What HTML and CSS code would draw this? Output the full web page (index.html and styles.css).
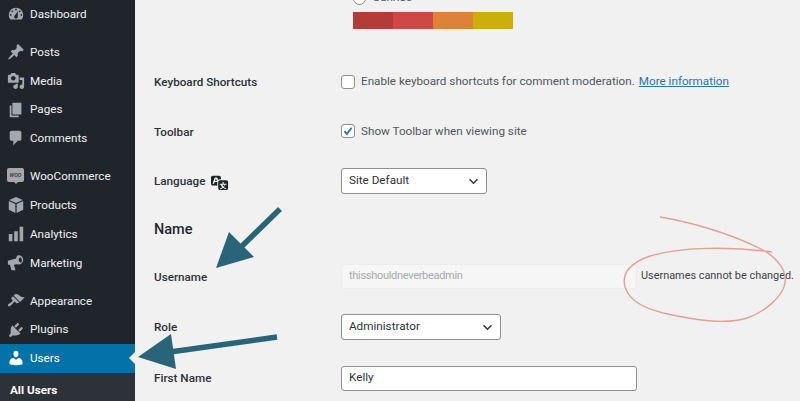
FILE: index.html
```html
<!DOCTYPE html>
<html lang="en">
<head>
<meta charset="utf-8">
<title>Profile</title>
<link rel="stylesheet" href="styles.css">
</head>
<body>
<div class="page">
  <nav class="sidebar">
    <a class="item"><svg class="ico" viewBox="0 0 20 20"><path fill-rule="evenodd" d="M3.76 16h12.48c1.1-1.37 1.76-3.11 1.76-5 0-4.42-3.58-8-8-8s-8 3.58-8 8c0 1.89.66 3.63 1.76 5zM10 4c.55 0 1 .45 1 1s-.45 1-1 1-1-.45-1-1 .45-1 1-1zM6 6c.55 0 1 .45 1 1s-.45 1-1 1-1-.45-1-1 .45-1 1-1zm8 0c.55 0 1 .45 1 1s-.45 1-1 1-1-.45-1-1 .45-1 1-1zm-5.37 5.55L12 7v6c0 1.1-.9 2-2 2s-2-.9-2-2c0-.57.24-1.08.63-1.45zM4 10c.55 0 1 .45 1 1s-.45 1-1 1-1-.45-1-1 .45-1 1-1zm12 0c.55 0 1 .45 1 1s-.45 1-1 1-1-.45-1-1 .45-1 1-1z"/></svg>Dashboard</a>
    <div class="group">
      <a class="item"><svg class="ico" viewBox="0 0 20 20"><path d="M10.44 3.02l1.82-1.82 6.36 6.35-1.83 1.82c-1.05-.68-2.48-.57-3.41.36l-.75.75c-.92.93-1.04 2.35-.35 3.41l-1.83 1.82-2.41-2.41-2.8 2.79c-.42.42-3.38 2.71-3.8 2.29s1.86-3.39 2.28-3.81l2.79-2.79L4.1 9.36l1.83-1.82c1.05.69 2.48.57 3.4-.36l.75-.75c.93-.92 1.05-2.35.36-3.41z"/></svg>Posts</a>
      <a class="item"><svg class="ico" viewBox="0 0 20 20"><path fill-rule="evenodd" d="M13 11V4c0-.55-.45-1-1-1h-1.67L9 1H5L3.67 3H2c-.55 0-1 .45-1 1v7c0 .55.45 1 1 1h10c.55 0 1-.45 1-1zM7 4.5c1.38 0 2.5 1.12 2.5 2.5S8.38 9.5 7 9.5 4.5 8.38 4.5 7 5.62 4.5 7 4.5zM14 6h5v10.5c0 1.38-1.12 2.5-2.5 2.5S14 17.88 14 16.5s1.12-2.5 2.5-2.5c.17 0 .34.02.5.05V9h-3V6zm-4 8.05V13h2v3.5c0 1.38-1.12 2.5-2.5 2.5S7 17.88 7 16.5 8.12 14 9.5 14c.17 0 .34.02.5.05z"/></svg>Media</a>
      <a class="item"><svg class="ico" viewBox="0 0 20 20"><path d="M6 15V2h10v13H6zm-1 1h8v2H3V5h2v11z"/></svg>Pages</a>
      <a class="item"><svg class="ico" viewBox="0 0 20 20"><path d="M5 2h9c1.1 0 2 .9 2 2v7c0 1.1-.9 2-2 2h-2l-5 5v-5H5c-1.1 0-2-.9-2-2V4c0-1.1.9-2 2-2z"/></svg>Comments</a>
    </div>
    <div class="group">
      <a class="item"><span class="woo">woo</span>WooCommerce</a>
      <a class="item"><svg class="ico" viewBox="0 0 20 20"><path d="M10 1l7.5 3.4L10 7.8 2.500 4.400zM2 5.600l7.300 3.400V19L2 15.200zM18 5.600v9.600L10.700 19V9z"/></svg>Products</a>
      <a class="item"><svg class="ico" viewBox="0 0 20 20"><path d="M18 18V2h-4v16h4zm-6 0V7H8v11h4zm-6 0v-8H2v8h4z"/></svg>Analytics</a>
      <a class="item"><svg class="ico" viewBox="0 0 20 20"><path fill-rule="evenodd" d="M1 7.500l9-2.500a6 6 0 0 1 2-3.500 5 5 0 0 1 6 5.500 5 5 0 0 1-6 4.500l-3.500.2-.7 1 1.700 5.300H5l-1.700-6H1zM14.500 3.500a3.500 3.500 0 0 0-1.500 3.300 3.500 3.500 0 0 0 2.500 3 3.300 3.300 0 0 0 1-3.200 3.500 3.500 0 0 0-2-3.100z"/></svg>Marketing</a>
    </div>
    <div class="group">
      <a class="item"><svg class="ico" viewBox="0 0 20 20"><path d="M14.480 11.060L7.410 3.990l1.500-1.500c.5-.56 2.300-.47 3.510.32 1.210.8 1.430 1.280 2.910 2.100 1.180.64 2.450 1.260 4.450.85zm-.71.71L6.700 4.700 4.930 6.470c-.39.39-.39 1.020 0 1.410l1.060 1.060c.39.39.39 1.030 0 1.420-.6.6-1.430 1.110-2.210 1.690-.35.26-.7.53-1.010.84C1.430 13.230.4 14.660 1.400 15.660c.99 1 2.410-.03 3.750-1.370.31-.31.58-.66.85-1.020.57-.78 1.080-1.610 1.690-2.210.39-.39 1.020-.39 1.410 0l1.060 1.060c.39.39 1.020.39 1.410 0z"/></svg>Appearance</a>
      <a class="item"><svg class="ico" viewBox="0 0 20 20"><path d="M13.110 4.360L9.870 7.600 8 5.730l3.240-3.240c.35-.34 1.050-.2 1.560.32.520.51.660 1.210.310 1.550zm-8 1.770l.91-1.120 9.010 9.010-1.190.84c-.71.71-2.630 1.160-3.820 1.160H6.140L4.900 17.260c-.59.59-1.540.59-2.120 0-.59-.58-.59-1.530 0-2.120l1.240-1.240v-3.880c0-1.130.4-3.190 1.090-3.890zm7.260 3.970l3.240-3.240c.34-.35 1.040-.21 1.550.31.520.51.660 1.210.310 1.550l-3.240 3.250z"/></svg>Plugins</a>
      <a class="item current"><svg class="ico" viewBox="0 0 20 20"><path d="M10 9.250c-2.270 0-2.730-3.440-2.730-3.440C7 4.020 7.820 2 9.970 2c2.160 0 2.980 2.020 2.710 3.810 0 0-.41 3.440-2.680 3.440zm0 2.570L12.720 10c2.390 0 4.520 2.330 4.520 4.530v2.490s-3.650 1.130-7.240 1.130c-3.650 0-7.240-1.130-7.240-1.130v-2.490c0-2.250 1.940-4.480 4.470-4.480z"/></svg>Users</a>
    </div>
    <div class="submenu"><a class="subitem">All Users</a></div>
  </nav>

  <main class="content">
    <div class="scheme">
      <label class="radio-line"><span class="radio"></span>Sunrise</label>
      <div class="swatches">
        <span class="sw sw1"></span><span class="sw sw2"></span><span class="sw sw3"></span><span class="sw sw4"></span>
      </div>
    </div>

    <div class="row r50">
      <div class="label">Keyboard Shortcuts</div>
      <div class="field"><span class="check"></span><span>Enable keyboard shortcuts for comment moderation.</span> <a class="link">More information</a></div>
    </div>
    <div class="row r49">
      <div class="label">Toolbar</div>
      <div class="field"><span class="check checked"><svg viewBox="0 0 14 14"><path d="M2.800 7.200l3 3.200 5.400-7.200" fill="none" stroke="#2b7cb0" stroke-width="2.200"/></svg></span><span>Show Toolbar when viewing site</span></div>
    </div>
    <div class="row r50">
      <div class="label">Language <svg class="lang" viewBox="0 0 20 20"><path fill-rule="evenodd" d="M11 7H9.490c-.63 0-1.250.3-1.590.7L7 5H4.130l-2.390 7h1.690l.74-2H7v4H2c-1.100 0-2-.9-2-2V5c0-1.100.9-2 2-2h7c1.100 0 2 .9 2 2v2zM6.510 9H4.490l1-2.930zM10 8h7c1.100 0 2 .9 2 2v7c0 1.100-.9 2-2 2h-7c-1.100 0-2-.9-2-2v-7c0-1.100.9-2 2-2zm7.250 5v-1.080h-3.170V9.750h-1.160v2.170H9.750V13h1.150c.34 1.120.88 2.060 1.600 2.800-.73.65-1.550 1.150-2.470 1.500l.46 1.070c1.050-.45 2-1.060 2.820-1.850.72.62 1.830 1.180 3.340 1.670l.47-1.070c-1.310-.35-2.340-.83-3-1.430.73-.84 1.250-1.780 1.520-2.690h1.010zm-2.250 0c-.23.7-.6 1.360-1.140 2-.52-.59-.92-1.280-1.130-2h2.270z"/></svg></div>
      <div class="field"><div class="select w146">Site Default<svg class="chev" viewBox="0 0 12 8"><path d="M1.500 1.500L6 6l4.500-4.500" fill="none" stroke="#2c3338" stroke-width="1.600"/></svg></div></div>
    </div>
    <h2 class="heading">Name</h2>
    <div class="row r49">
      <div class="label">Username</div>
      <div class="field"><div class="input disabled">thisshouldneverbeadmin</div><span class="note">Usernames cannot be changed.</span></div>
    </div>
    <div class="row r52">
      <div class="label">Role</div>
      <div class="field"><div class="select w160">Administrator<svg class="chev" viewBox="0 0 12 8"><path d="M1.500 1.500L6 6l4.500-4.500" fill="none" stroke="#2c3338" stroke-width="1.600"/></svg></div></div>
    </div>
    <div class="row r50">
      <div class="label">First Name</div>
      <div class="field"><div class="input">Kelly</div></div>
    </div>
  </main>

  <svg class="overlay" viewBox="0 0 800 401">
    <path class="arrow-line" d="M280 209L240 248"/>
    <path class="arrow-head" d="M216 268L229 232L254 257Z"/>
    <path class="arrow-line" d="M277 337L170 352"/>
    <path class="arrow-head" d="M138 357L171 334L176 369Z"/>
    <path class="circle" d="M660 217C690 222 730 233 763 250C777 258 787 270 785 283C783 296 765 312 747 318C725 325 695 320 663 313C645 308 630 302 625 287C621 272 633 262 650 256C680 247 730 246 772 252"/>
  </svg>
</div>
</body>
</html>
```

FILE: styles.css
```css
* { box-sizing: border-box; }
html, body { margin: 0; padding: 0; height: 401px; overflow: hidden; }
body { background: #f1f1f1; color: #3c434a; font: 11.700px/1.3 Roboto, "Liberation Sans", sans-serif; }

.page { position: relative; display: flex; width: 800px; height: 401px; overflow: hidden; }

.sidebar { flex: 0 0 135px; background: #20252b; display: flex; flex-direction: column; color: #f0f0f1; }
.item { position: relative; height: 28.8px; display: flex; align-items: center; padding-left: 30px; color: #eef0f1; }
.group { margin-top: 9.200px; }
.ico { position: absolute; left: 7px; top: 5px; width: 18px; height: 18px; fill: #a4a8ac; }
.woo { position: absolute; left: 7px; top: 6px; width: 17px; height: 14px; border-radius: 2px; background: #a4a8ac; color: #20252b; font-size: 6.500px; line-height: 14px; text-align: center; font-style: italic; }
.woo::after { content: ""; position: absolute; left: 7px; top: 14px; border: 2px solid transparent; border-top-color: #a4a8ac; }
.current { background: #0272a8; color: #fff; }
.current .ico { fill: #fff; }
.current::after { content: ""; position: absolute; right: 0; top: 8px; border: 6px solid transparent; border-right-color: #f1f1f1; border-left-width: 0; }
.submenu { background: #2c3237; flex: 1; padding-top: 10px; }
.subitem { display: block; padding-left: 10px; font-weight: 700; color: #fff; }

.content { flex: 1; padding-left: 19px; min-width: 0; }
.scheme { display: flow-root; height: 57px; padding-left: 199px; }
.radio-line { display: flex; align-items: center; gap: 7px; height: 20px; margin-top: -12px; color: #50575e; }
.radio { width: 13px; height: 13px; border-radius: 50%; border: 1px solid #8c8f94; background: #fff; }
.swatches { display: flex; width: 160px; height: 17px; margin-top: 4px; }
.sw { flex: 1; }
.sw1 { background: #b43c38; }
.sw2 { background: #cf4944; }
.sw3 { background: #dd823b; }
.sw4 { background: #ccaf0b; }

.row { display: flex; align-items: center; }
.r49 { height: 49px; }
.r50 { height: 50px; }
.r52 { height: 52px; }
.label { flex: 0 0 187px; padding-top: 2px; font-weight: 500; color: #2c3338; display: flex; align-items: center; gap: 6px; }
.lang { width: 18px; height: 18px; fill: #1d2327; }
.field { display: flex; align-items: center; color: #50575e; white-space: nowrap; }
.link { color: #2a76a8; text-decoration: underline; margin-left: 4px; }

.check { width: 14px; height: 14px; margin-right: 6px; border: 1px solid #8c8f94; border-radius: 3px; background: #fff; display: flex; }
.check svg { width: 100%; height: 100%; }

.select { position: relative; height: 26px; padding-left: 7px; border: 1px solid #8c8f94; border-radius: 3px; background: #fff; display: flex; align-items: center; color: #2c3338; }
.w146 { width: 146px; }
.w160 { width: 160px; }
.chev { position: absolute; right: 7px; top: 9px; width: 11px; height: 7px; }

.input { width: 296px; height: 25px; padding-left: 7px; border: 1px solid #8c8f94; border-radius: 3px; background: #fff; display: flex; align-items: center; color: #2c3338; }
.input.disabled { background: #f6f6f6; border-color: #ececec; color: #a7aaad; font-size: 11px; letter-spacing: -0.3px; }
.note { margin-left: 4px; font-size: 10.900px; color: #3c434a; }

.heading { height: 46px; margin: 0; padding-top: 2px; display: flex; align-items: center; font-size: 14.500px; font-weight: 500; color: #23282d; }

.overlay { position: absolute; left: 0; top: 0; width: 800px; height: 401px; pointer-events: none; }
.arrow-line { fill: none; stroke: #2a6478; stroke-width: 5.500; }
.arrow-head { fill: #2a6478; }
.circle { fill: none; stroke: #e3a093; stroke-width: 1.400; }
```
